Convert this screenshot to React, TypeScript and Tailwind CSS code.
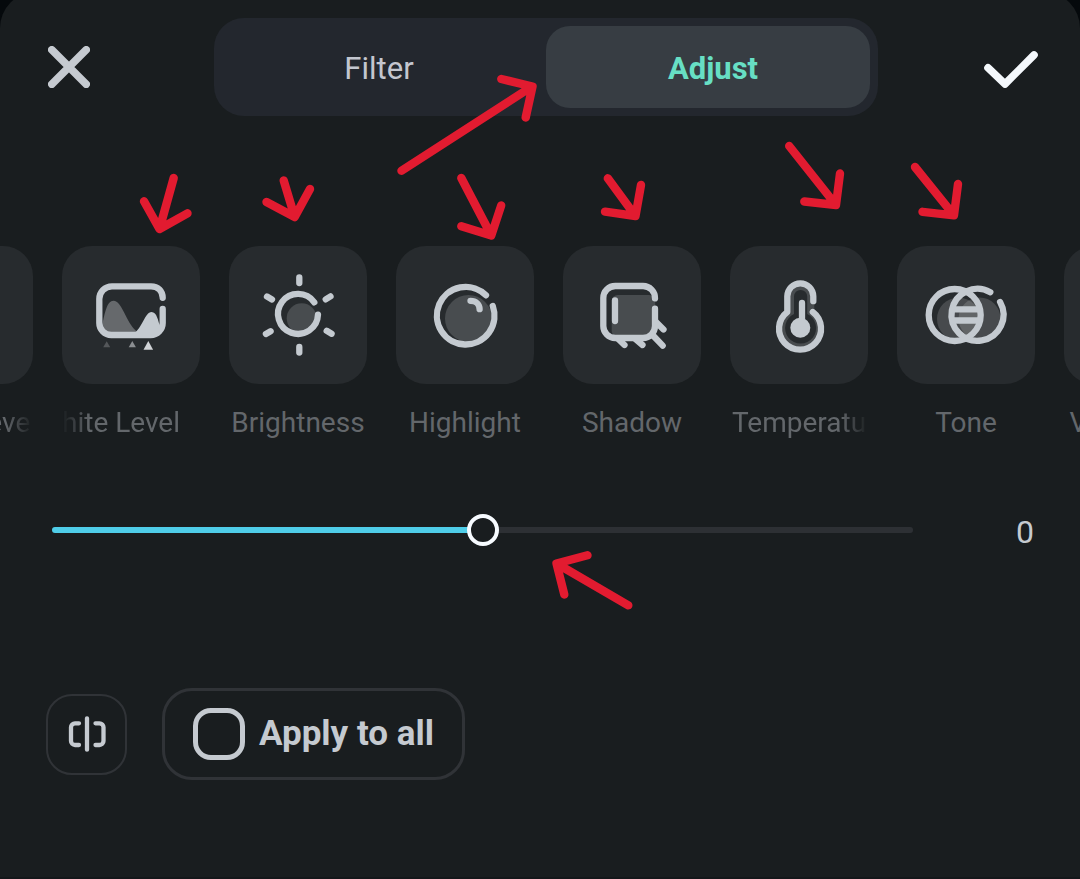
import { useState } from "react";
import type { CSSProperties, ReactNode } from "react";

const GREY = "#484c4f";

function WhiteLevelIcon() {
  return (
    <>
      <path d="M40 87V80C43 66 45 54.7 51.5 54.7C60 54.7 64 76 74 84.7L73 88H46Z" fill="#66696c" stroke="none" />
      <path d="M72 87C80 83 83 66 89.5 66C95 66 96 75 98 80L99 84L90 90H72Z" fill="#c4cad0" stroke="none" />
      <path d="M100.7 51.8C100.7 45 96 40.3 89 40.3H50A12.7 12.7 0 0 0 37.3 53V77A12 12 0 0 0 49.3 89H88.7A12 12 0 0 0 100.7 77V63" />
      <path d="M44.7 95.3L48.2 101.3H41.2Z" fill="#54575a" stroke="none" />
      <path d="M70.3 95L73.9 101.3H66.7Z" fill="#8b8e91" stroke="none" />
      <path d="M86.3 95L91.1 103.7H81.5Z" fill="#d0d3d6" stroke="none" />
    </>
  );
}

function BrightnessIcon() {
  return (
    <>
      <circle cx="72.7" cy="72.3" r="15" fill={GREY} stroke="none" />
      <path d="M85.3 56.3A20 20 0 1 0 89 68.7" />
      <path d="M70.3 31.5V37M70.3 101V106.5M38 50.5L43 53.5M96.7 53.4L101.5 50.4M36.9 88L41.6 85.2M97.7 84.8L102.6 87.8" />
    </>
  );
}

function HighlightIcon() {
  return (
    <>
      <circle cx="72.5" cy="72.5" r="23.5" fill={GREY} stroke="none" />
      <path d="M90 49.3A28.8 28.8 0 1 0 96.8 60" />
      <path d="M74.5 54.8C80 54.8 83.6 58.5 83.6 63.2" />
    </>
  );
}

function ShadowIcon() {
  return (
    <>
      <rect x="48.7" y="49" width="43.5" height="42" rx="6" fill={GREY} stroke="none" />
      <path d="M92 52.3A12 12 0 0 0 80 40H52.3A12 12 0 0 0 40.3 52V80A12 12 0 0 0 52.3 92H80A12 12 0 0 0 92 80V62.7" />
      <path d="M52 54.5V75" />
      <path d="M55.3 93L61.5 99M72.5 93L79.5 99M90.5 90L99.7 99.7M93 76L100.5 83.5" />
    </>
  );
}

function TemperatureIcon() {
  return (
    <>
      <path d="M84.3 65V50.3A13 13 0 0 0 57.3 50.3V66A21 21 0 1 0 84.3 66Z" fill={GREY} stroke="none" />
      <path d="M64 68V50.5A6.6 6.6 0 0 1 77.2 50.5V68A15.5 15.5 0 1 1 64 68Z" fill="#272b2e" stroke="none" />
      <path d="M83.3 55.2V50.3A13 13 0 0 0 57.3 50.3V66A21 21 0 1 0 82.8 66" />
      <circle cx="70.3" cy="81.7" r="10" fill="#c4cad0" stroke="none" />
      <path d="M72 57V78" />
    </>
  );
}

function ToneIcon() {
  return (
    <>
      <circle cx="61.5" cy="73" r="21.5" fill="#ffffff" fillOpacity="0.15" stroke="none" />
      <circle cx="82.5" cy="72.5" r="21" fill="#ffffff" fillOpacity="0.15" stroke="none" />
      <circle cx="57.7" cy="69" r="26" />
      <path d="M93.3 46.2A26 26 0 1 0 103.1 56" />
      <path d="M57 63.3H82M57 74.5H82" />
    </>
  );
}

type Align = "center" | "start" | "scrolled";

const labelAlign: Record<Align, string> = {
  center: "justify-center",
  start: "justify-start pl-0.5 [mask-image:linear-gradient(to_right,black_80%,transparent)]",
  scrolled: "justify-end pr-5 [mask-image:linear-gradient(to_right,transparent,black_20%)]",
};

const tools: { name: string; align: Align; icon: ReactNode }[] = [
  { name: "Black Level", align: "start", icon: null },
  { name: "White Level", align: "scrolled", icon: <WhiteLevelIcon /> },
  { name: "Brightness", align: "center", icon: <BrightnessIcon /> },
  { name: "Highlight", align: "center", icon: <HighlightIcon /> },
  { name: "Shadow", align: "center", icon: <ShadowIcon /> },
  { name: "Temperature", align: "start", icon: <TemperatureIcon /> },
  { name: "Tone", align: "center", icon: <ToneIcon /> },
  { name: "Vignetting", align: "center", icon: null },
];

function ToolButton({ name, align, icon }: { name: string; align: Align; icon: ReactNode }) {
  return (
    <li className="w-[138px] shrink-0">
      <button type="button" className="flex w-full flex-col gap-5">
        <span className="block aspect-square w-full rounded-[30px] bg-[#272b2e]">
          <svg
            viewBox="0 0 138 138"
            className="size-full"
            fill="none"
            stroke="#c4cad0"
            strokeWidth="6.3"
            strokeLinecap="round"
            strokeLinejoin="round"
            aria-hidden="true"
          >
            {icon}
          </svg>
        </span>
        <span
          className={`flex w-full overflow-hidden text-[28px] leading-[38px] whitespace-nowrap text-[#63676b] ${labelAlign[align]}`}
        >
          {name}
        </span>
      </button>
    </li>
  );
}

function Arrows() {
  return (
    <svg
      className="pointer-events-none absolute top-0 left-0 h-[879px] w-[1080px]"
      viewBox="0 0 1080 879"
      fill="none"
      stroke="#e21b30"
      strokeWidth="8.4"
      strokeLinecap="round"
      strokeLinejoin="round"
      aria-hidden="true"
    >
      <path d="M401.5 170.7L532 86.5M501.3 79L532.5 86.5L525.7 117.5" />
      <path d="M173.7 178L159.5 229M144 201.3L159.5 229L187.5 213.3" />
      <path d="M283.7 180.5L294.7 217M266.5 202L294.7 217L310 189" />
      <path d="M461.3 178L491.3 235.5M461.3 226.3L491.3 235.5L501.2 205.5" />
      <path d="M607.8 178.3L635.5 216M605 211.7L635.5 216L641 185" />
      <path d="M789.2 146L836 205M804.3 201.5L836 205L840 173.5" />
      <path d="M915 167L954 215.3M922.5 211.8L954 215.3L958 184" />
      <path d="M628.3 605.3L556.5 563.5M587.5 555.3L556.5 563.5L564.3 594.5" />
    </svg>
  );
}

const tabs = [
  { name: "Filter", inset: "pr-2.5" },
  { name: "Adjust", inset: "pl-2.5" },
];

export default function App() {
  const [tab, setTab] = useState("Adjust");
  const [value, setValue] = useState(0);
  const [applyAll, setApplyAll] = useState(false);

  return (
    <div className="relative flex min-h-screen flex-col overflow-hidden bg-[#05090c] font-[Roboto,sans-serif]">
      <main className="-mt-2 flex-1 rounded-t-[36px] border-b-2 border-[#14171a] bg-[#191d1f] pt-[26px]">
        <header className="grid grid-cols-[1fr_4fr_1fr] items-center pr-9 pl-12">
          <button type="button" aria-label="Close" className="justify-self-start">
            <svg width="42" height="42" viewBox="0 0 42 42" fill="none" stroke="#c5cad0" strokeWidth="7.6" strokeLinecap="round">
              <path d="M3.8 3.8L38.2 38.2M38.2 3.8L3.8 38.2" />
            </svg>
          </button>
          <div role="tablist" className="flex rounded-[30px] bg-[#23272e] p-2">
            {tabs.map(({ name, inset }) => (
              <button
                key={name}
                type="button"
                role="tab"
                aria-selected={tab === name}
                onClick={() => setTab(name)}
                className={`h-[82px] flex-1 rounded-3xl pt-1 text-[31px] ${inset} ${
                  tab === name ? "bg-[#373d43] font-bold text-[#67dfc4]" : "text-[#c3c6cf]"
                }`}
              >
                {name}
              </button>
            ))}
          </div>
          <button type="button" aria-label="Confirm" className="justify-self-end">
            <svg width="60" height="42" viewBox="0 0 60 42" fill="none" stroke="#f4f8fc" strokeWidth="7.6" strokeLinecap="round" strokeLinejoin="round">
              <path d="M4 21.8L21 38L50 9" />
            </svg>
          </button>
        </header>

        <ul className="mt-[130px] flex justify-center gap-[29px] overflow-hidden pl-[17px]">
          {tools.map((tool) => (
            <ToolButton key={tool.name} {...tool} />
          ))}
        </ul>

        <div className="mt-[70px] flex items-center pr-[46px] pl-[52px]">
          <input
            type="range"
            min={-50}
            max={50}
            value={value}
            onChange={(e) => setValue(Number(e.target.value))}
            aria-label="White Level"
            style={{ "--fill": `${value + 50}%` } as CSSProperties}
            className="h-8 min-w-0 flex-1 appearance-none bg-transparent [&::-webkit-slider-runnable-track]:h-1.5 [&::-webkit-slider-runnable-track]:rounded-full [&::-webkit-slider-runnable-track]:bg-[linear-gradient(to_right,#4fcde8_var(--fill),#2d3034_var(--fill))] [&::-webkit-slider-thumb]:-mt-[13px] [&::-webkit-slider-thumb]:size-8 [&::-webkit-slider-thumb]:appearance-none [&::-webkit-slider-thumb]:rounded-full [&::-webkit-slider-thumb]:border-4 [&::-webkit-slider-thumb]:border-[#f7fbff] [&::-webkit-slider-thumb]:bg-[#191d1f]"
          />
          <output className="w-[121px] pt-1 text-right text-[32px] leading-8 text-[#c5cad0]">{value}</output>
        </div>

        <div className="mt-[140px] flex items-center gap-[35px] px-[46px] pb-24">
          <button
            type="button"
            aria-label="Compare"
            className="flex size-[81px] items-center justify-center rounded-[26px] border-2 border-[#303337]"
          >
            <svg width="40" height="40" viewBox="0 0 40 40" fill="none" stroke="#c5cad0" strokeWidth="4.3" strokeLinecap="round" strokeLinejoin="round">
              <path d="M20 4.3V35.7M12 9.3H8A4 4 0 0 0 4 13.3V27A4 4 0 0 0 8 31H12M28.5 9.3H32.5A4 4 0 0 1 36.5 13.3V27A4 4 0 0 1 32.5 31H28.5" />
            </svg>
          </button>
          <label className="flex h-[92px] items-center gap-3.5 rounded-[30px] border-3 border-[#303337] px-7 text-[35px] font-bold text-[#c5cad0]">
            <input
              type="checkbox"
              checked={applyAll}
              onChange={(e) => setApplyAll(e.target.checked)}
              className="size-[52px] appearance-none rounded-[18px] border-[5px] border-[#c5cad0] checked:bg-[#67dfc4]"
            />
            Apply to all
          </label>
        </div>
      </main>
      <Arrows />
    </div>
  );
}
